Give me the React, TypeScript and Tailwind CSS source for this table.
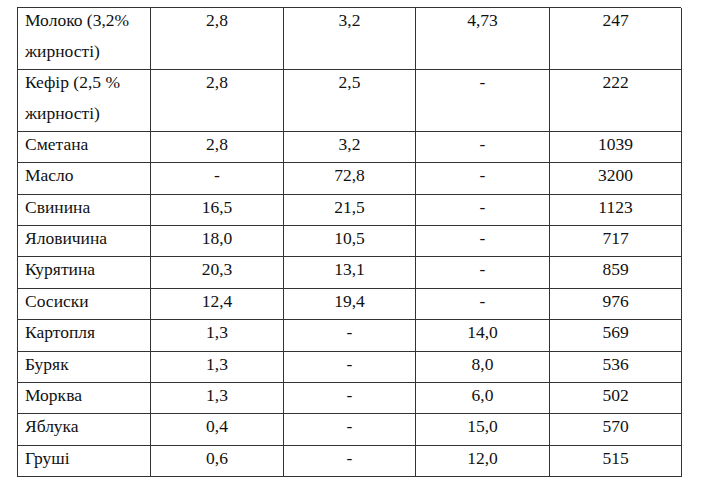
import React from "react";

const rows: [string, string, string, string, string][] = [
  ["Молоко (3,2% жирності)", "2,8", "3,2", "4,73", "247"],
  ["Кефір (2,5 % жирності)", "2,8", "2,5", "-", "222"],
  ["Сметана", "2,8", "3,2", "-", "1039"],
  ["Масло", "-", "72,8", "-", "3200"],
  ["Свинина", "16,5", "21,5", "-", "1123"],
  ["Яловичина", "18,0", "10,5", "-", "717"],
  ["Курятина", "20,3", "13,1", "-", "859"],
  ["Сосиски", "12,4", "19,4", "-", "976"],
  ["Картопля", "1,3", "-", "14,0", "569"],
  ["Буряк", "1,3", "-", "8,0", "536"],
  ["Морква", "1,3", "-", "6,0", "502"],
  ["Яблука", "0,4", "-", "15,0", "570"],
  ["Груші", "0,6", "-", "12,0", "515"],
];

function Cell({ text, first }: { text: string; first: boolean }) {
  return (
    <div
      className={
        first
          ? "border-r border-b border-[#333] pl-[7px] pr-[4px] text-left"
          : "border-r border-b border-[#333] text-center"
      }
    >
      <div className="-mt-[3px] font-['Liberation_Serif','Times_New_Roman',serif] text-[17.5px] leading-[31px] text-[#111]">
        {text}
      </div>
    </div>
  );
}

export default function App() {
  return (
    <div className="w-[706px] h-[478px] bg-white overflow-hidden pt-[7px] pl-[17px]">
      <div className="grid grid-cols-[133px_133px_132px_134px_132px] grid-rows-[62px_62px_repeat(11,31.36px)] w-[664px] border-l border-t border-[#333]">
        {rows.map((r, i) =>
          r.map((c, j) => <Cell key={`${i}-${j}`} text={c} first={j === 0} />)
        )}
      </div>
    </div>
  );
}
